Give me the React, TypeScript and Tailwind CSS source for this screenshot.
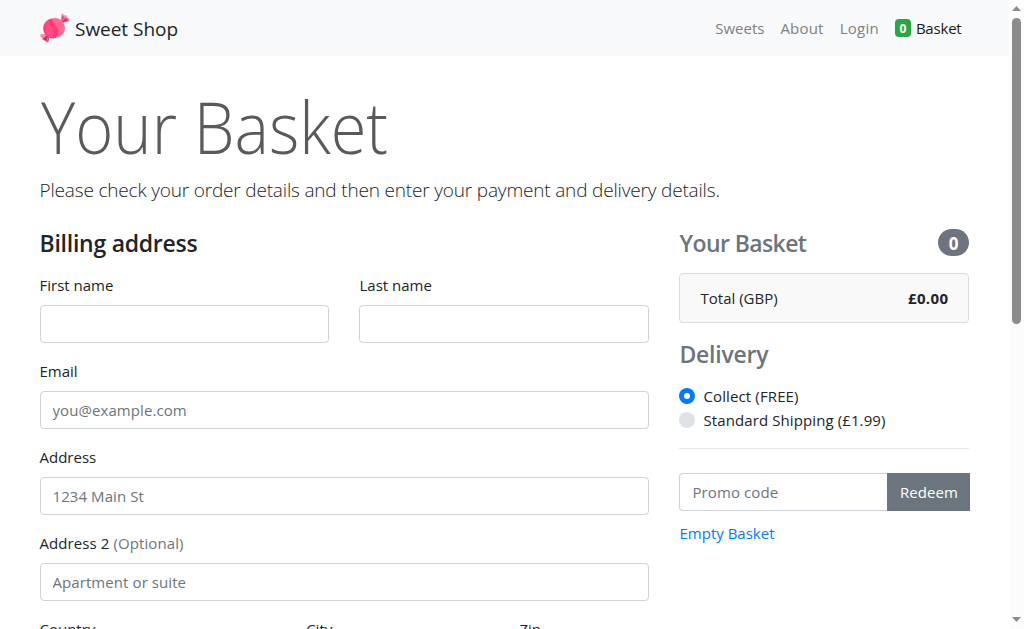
import type { ReactNode } from "react";

function CandyLogo() {
  return (
    <svg width="30" height="30" viewBox="0 0 30 30" className="shrink-0">
      <path d="M20.4 9.8 21.4 1.2 22.8 .6 24.4 2.4 26.2 2 27 4.2 29.2 5.4 29.6 8.2 21 10.6Z" fill="#ff87ac" />
      <path d="M20.8 10 22.2 2.4 24.6 4.4Z" fill="#e0527f" />
      <path d="M20.8 10 25.6 4.8 28.6 7.6Z" fill="#cf3467" />
      <path d="M9.2 20.2 .4 21.6 .3 23.8 2 24.8 2.4 27 5 27.4 6.3 29.6 8.3 29.2 10 20.8Z" fill="#ff87ac" />
      <path d="M9.6 20.4 2.8 25.4 6 28.4Z" fill="#c8335f" />
      <path d="M9.6 20.4 7 28.6 8.3 28.8Z" fill="#e8316c" />
      <circle cx="15" cy="15" r="10" fill="#ff6699" />
      <path d="M12.2 5.4C12.5 10 18 13 18.4 18Q18.4 21.6 16 24.95A10 10 0 1 1 12.2 5.4Z" fill="#ff3c78" />
      <path d="M8.4 7.5C8.4 12 13 14.5 13.2 18.5Q13.2 22 12 24.5A10 10 0 0 1 8.4 7.5Z" fill="#ff4c84" />
    </svg>
  );
}

function Field({ label, placeholder }: { label: ReactNode; placeholder?: string }) {
  return (
    <div className="mb-4 flex min-w-0 flex-col">
      <label className="-ml-[0.5px] mb-2 h-6">{label}</label>
      <input
        type="text"
        placeholder={placeholder}
        className="h-[38px] w-full rounded border border-[#ced4da] bg-white px-[11.5px] tracking-[0.08px] placeholder:text-[#6c757d] placeholder:opacity-100"
      />
    </div>
  );
}

function Navbar() {
  return (
    <nav className="h-14 bg-[#f8f9fa]">
      <div className="mx-auto flex h-full w-[960px] items-center px-[15px]">
        <a className="flex items-center gap-[5.5px] text-[19px] tracking-[-0.03px]">
          <CandyLogo />
          <span className="mt-0.5">Sweet Shop</span>
        </a>
        <div className="ml-auto flex items-center gap-4 pr-2 text-[#7f8081]">
          <a>Sweets</a>
          <a className="tracking-[0.2px]">About</a>
          <a className="tracking-[0.25px]">Login</a>
          <a className="flex items-center tracking-[-0.2px] text-[#191919]">
            <span className="mr-[5px] flex h-[18px] w-4 items-center justify-center rounded bg-[#28a745] pt-0.5 text-xs font-bold text-white">0</span>
            Basket
          </a>
        </div>
      </div>
    </nav>
  );
}

function Billing() {
  return (
    <section className="w-[639.5px] pr-[15px] pl-[15.5px]">
      <h4 className="-ml-[0.5px] mb-[15px] pt-px text-[23px] leading-[28.8px] font-semibold tracking-[-0.25px]">Billing address</h4>
      <div className="grid grid-cols-[289px_290px] gap-[30px]">
        <Field label="First name" />
        <Field label={<span className="ml-px">Last name</span>} />
      </div>
      <Field label="Email" placeholder="you@example.com" />
      <Field label="Address" placeholder="1234 Main St" />
      <Field label={<span className="tracking-[0.09px]">Address 2 <span className="text-[#6c757d]">(Optional)</span></span>} placeholder="Apartment or suite" />
      <div className="grid grid-cols-[236.66px_183.33px_129px] gap-[30px]">
        <Field label="Country" />
        <Field label="City" />
        <Field label="Zip" />
      </div>
    </section>
  );
}

function Summary() {
  return (
    <aside className="w-[320px] px-[15px]">
      <h4 className="mb-4 flex h-[29px] items-center justify-between pl-[0.5px] text-[23px] leading-[28.8px] font-semibold text-[#6c757d]">
        <span className="pt-0.5 tracking-[-0.6px]">Your Basket</span>
        <span className="flex h-[27px] w-[31px] items-center justify-center rounded-full bg-[#6c757d] pt-[3px] text-[17px] font-bold text-white">0</span>
      </h4>
      <div className="mb-[17px] flex h-[50px] items-center justify-between rounded border border-[#dbdbdc] bg-[#f9f9f9] pr-[19.5px] pl-[20.5px]">
        <span>Total (GBP)</span>
        <strong className="font-bold tracking-[0.4px]">£0.00</strong>
      </div>
      <h4 className="mb-[15px] pl-[0.5px] text-[23px] leading-[28.8px] font-semibold tracking-[-0.25px] text-[#6c757d]">Delivery</h4>
      <label className="flex h-6 items-center gap-[8.5px] tracking-[0.12px]">
        <span className="flex size-4 items-center justify-center rounded-full bg-[#007bff]">
          <span className="size-1.5 rounded-full bg-white" />
        </span>
        Collect (FREE)
      </label>
      <label className="flex h-6 items-center gap-[8.5px] tracking-[0.1px]">
        <span className="size-4 rounded-full bg-[#dee2e6]" />
        Standard Shipping (£1.99)
      </label>
      <hr className="mt-4 mb-6 border-[#e5e5e5]" />
      <div className="-mr-px flex h-[38px]">
        <input
          placeholder="Promo code"
          className="min-w-0 flex-1 rounded-l border border-r-0 border-[#ced4da] px-[12.5px] tracking-[0.1px] placeholder:text-[#6c757d] placeholder:opacity-100"
        />
        <button className="w-[83px] bg-[#6c757d] pl-px tracking-[0.05px] text-white">Redeem</button>
      </div>
      <a className="mt-2.5 block pl-[0.5px] text-[#007bff]">Empty Basket</a>
    </aside>
  );
}

function Scrollbar() {
  return (
    <div className="flex w-[15px] flex-col items-center bg-[#fcfcfc] pt-[6px] pb-[7px]">
      <svg width="9" height="5" viewBox="0 0 9 5" fill="#8b8b8b"><path d="M4.5 0 9 5H0Z" /></svg>
      <div className="mt-[7px] h-[306px] w-[9px] rounded-full bg-[#8b8b8b]" />
      <svg className="mt-auto" width="9" height="5" viewBox="0 0 9 5" fill="#8b8b8b"><path d="M0 0H9L4.5 5Z" /></svg>
    </div>
  );
}

export default function App() {
  return (
    <div className="flex h-[629px] w-[1024px] overflow-hidden bg-white font-['Open_Sans','Noto_Sans',sans-serif] text-[15px] leading-6 text-[#212529]">
      <div className="h-[629px] w-[1009px] overflow-hidden">
        <Navbar />
        <div className="mx-auto w-[960px]">
          <header className="h-[172.2px] px-[15px] pt-[27px]">
            <h1 className="origin-left scale-x-[0.915] pl-px text-[71px] leading-[88px] font-light text-[#5a5a5a]">Your Basket</h1>
            <p className="mt-1 text-[19px] leading-[30px] font-light tracking-[-0.175px]">Please check your order details and then enter your payment and delivery details.</p>
          </header>
          <div className="flex">
            <Billing />
            <Summary />
          </div>
        </div>
      </div>
      <Scrollbar />
    </div>
  );
}
